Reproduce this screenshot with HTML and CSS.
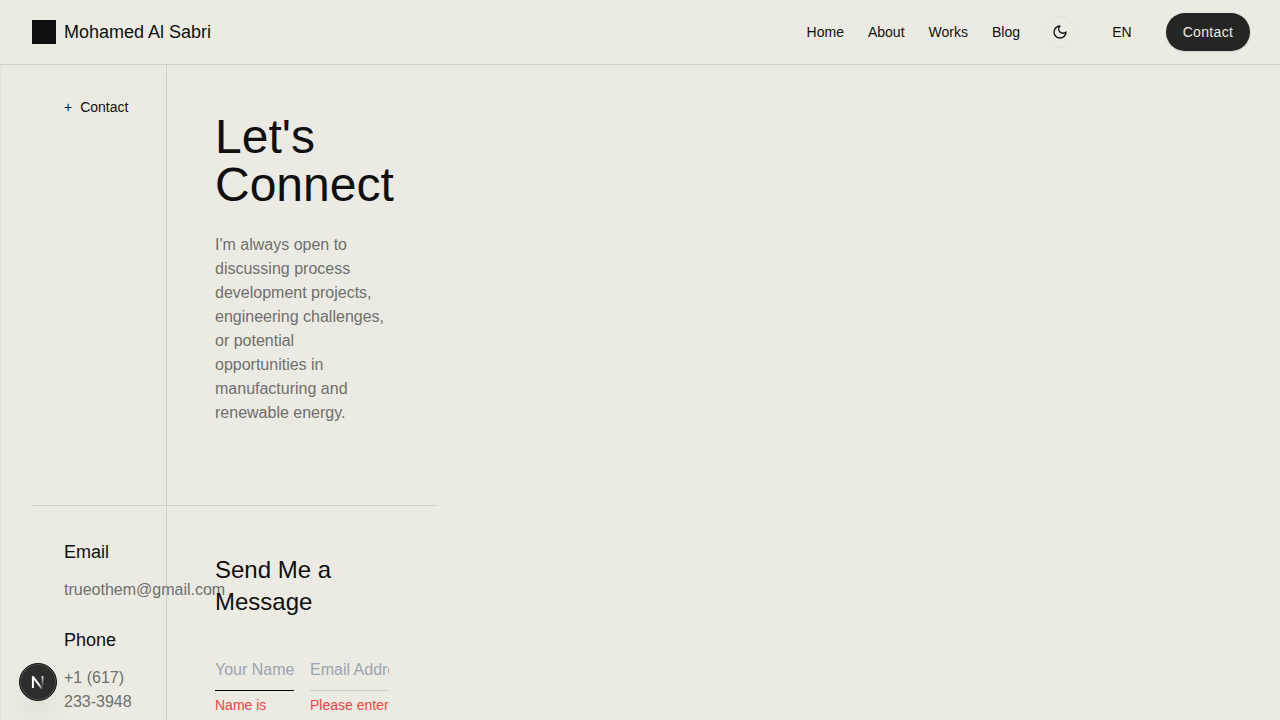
FILE: index.html
```html
<!DOCTYPE html>
<html lang="en">
<head>
<meta charset="utf-8">
<title>Mohamed Al Sabri</title>
<link rel="stylesheet" href="styles.css">
</head>
<body>
<header class="header">
  <a class="brand"><span class="brand-mark"></span><span class="brand-name">Mohamed Al Sabri</span></a>
  <nav class="nav">
    <a>Home</a><a>About</a><a>Works</a><a>Blog</a>
    <button class="theme" aria-label="Toggle theme"><svg width="16" height="16" viewBox="0 0 24 24" fill="none" stroke="currentColor" stroke-width="2" stroke-linecap="round" stroke-linejoin="round"><path d="M12 3a6 6 0 0 0 9 9 9 9 0 1 1-9-9Z"/></svg></button>
    <button class="lang">EN</button>
    <a class="cta">Contact</a>
  </nav>
</header>
<main class="page">
  <div class="grid">
    <aside class="side"><div class="crumb"><span>+</span><span>Contact</span></div></aside>
    <section class="intro">
      <h1>Let's Connect</h1>
      <p>I'm always open to discussing process development projects, engineering challenges, or potential opportunities in manufacturing and renewable energy.</p>
    </section>
    <aside class="side details">
      <h3>Email</h3>
      <p>trueothem@gmail.com</p>
      <h3>Phone</h3>
      <p>+1 (617) 233-3948</p>
    </aside>
    <section class="message">
      <h2>Send Me a Message</h2>
      <form class="fields">
        <div class="field"><input class="active" placeholder="Your Name"><p class="error">Name is required</p></div>
        <div class="field"><input placeholder="Email Address"><p class="error">Please enter a valid email</p></div>
      </form>
    </section>
  </div>
</main>
<div class="dev-badge"><svg width="36" height="36" viewBox="2 2 36 36" fill="none">
  <defs>
    <linearGradient id="diag" x1="21.5" y1="22" x2="25.5" y2="27.5" gradientUnits="userSpaceOnUse"><stop stop-color="#fff"/><stop offset="1" stop-color="#fff" stop-opacity="0"/></linearGradient>
    <linearGradient id="stem" x1="25" y1="14" x2="25" y2="25" gradientUnits="userSpaceOnUse"><stop stop-color="#fff" stop-opacity=".85"/><stop offset="1" stop-color="#fff" stop-opacity="0"/></linearGradient>
  </defs>
  <path d="M14.9 14.2V26" stroke="#fff" stroke-width="2"/>
  <path d="M15 14.8L24.2 27" stroke="url(#diag)" stroke-width="2"/>
  <path d="M24.5 14v11" stroke="url(#stem)" stroke-width="1.8"/>
</svg></div>
</body>
</html>
```
FILE: styles.css
```css
* { box-sizing: border-box; margin: 0; padding: 0; }
body {
  height: 720px;
  overflow: hidden;
  background: #ebebe3;
  color: #0f0f0f;
  font: 16px/24px "Liberation Sans", Arial, sans-serif;
}
button, input { font: inherit; color: inherit; background: none; border: 0; }
h1, h2, h3 { font-weight: 400; }
.header {
  display: flex;
  align-items: center;
  justify-content: space-between;
  height: 65px;
  padding: 0 30px 1px 32px;
  border-bottom: 1px solid #d0d0c8;
}
.brand { display: flex; align-items: center; gap: 8px; font-size: 18px; }
.brand-mark { width: 24px; height: 24px; background: #0f0f0f; }
.nav { display: flex; align-items: center; gap: 24px; font-size: 14px; line-height: 20px; }
.theme {
  display: grid;
  place-items: center;
  width: 32px;
  height: 32px;
  border: 1px solid #e4e4dc;
  border-radius: 50%;
}
.lang { width: 44px; }
.cta {
  width: 84px;
  height: 38px;
  margin-left: -2px;
  border-radius: 19px;
  background: #252523;
  color: #ebebe3;
  line-height: 38px;
  letter-spacing: .35px;
  text-align: center;
  box-shadow: 0 1px 2px rgba(0, 0, 0, .12);
}
.page { height: 655px; padding-left: 31px; border-left: 1px solid #e3e3db; overflow: hidden; }
.grid { display: grid; grid-template-columns: 135px 270px; grid-template-rows: 441px 1fr; width: 405px; height: 655px; }
.side { padding: 32px; border-right: 1px solid #d0d0c8; }
.side, .intro { min-width: 0; }
.grid > :nth-child(-n+2) { border-bottom: 1px solid #d0d0c8; }
.crumb { display: flex; gap: 8px; font-size: 14px; line-height: 20px; }
.intro { padding: 48px; }
h1 { margin-bottom: 24px; font-size: 48px; line-height: 48px; }
.intro p, .details p { color: #6f6f6c; }
h3 { margin-bottom: 12px; font-size: 18px; line-height: 28px; }
.details p { margin-bottom: 24px; }
.message { padding: 48px; }
h2 { margin-bottom: 32px; font-size: 24px; line-height: 32px; }
.fields { display: grid; grid-template-columns: 79px 79px; gap: 16px; }
.field { min-width: 0; }
input { display: block; width: 100%; height: 41px; padding: 8px 0; border-bottom: 1px solid #d0d0c8; }
input::placeholder { color: #9ca3af; opacity: 1; }
input.active { border-color: #000; }
.error { margin-top: 4px; color: #ef4444; font-size: 14px; line-height: 21px; }
.dev-badge {
  position: fixed;
  left: 19px;
  top: 663px;
  display: grid;
  place-items: center;
  width: 38px;
  height: 38px;
  border: 1px solid #111;
  border-radius: 50%;
  background: #2d2d2c;
  box-shadow: inset 0 0 0 1px #50504e, 0 16px 32px -8px rgba(0, 0, 0, .14);
}
```
